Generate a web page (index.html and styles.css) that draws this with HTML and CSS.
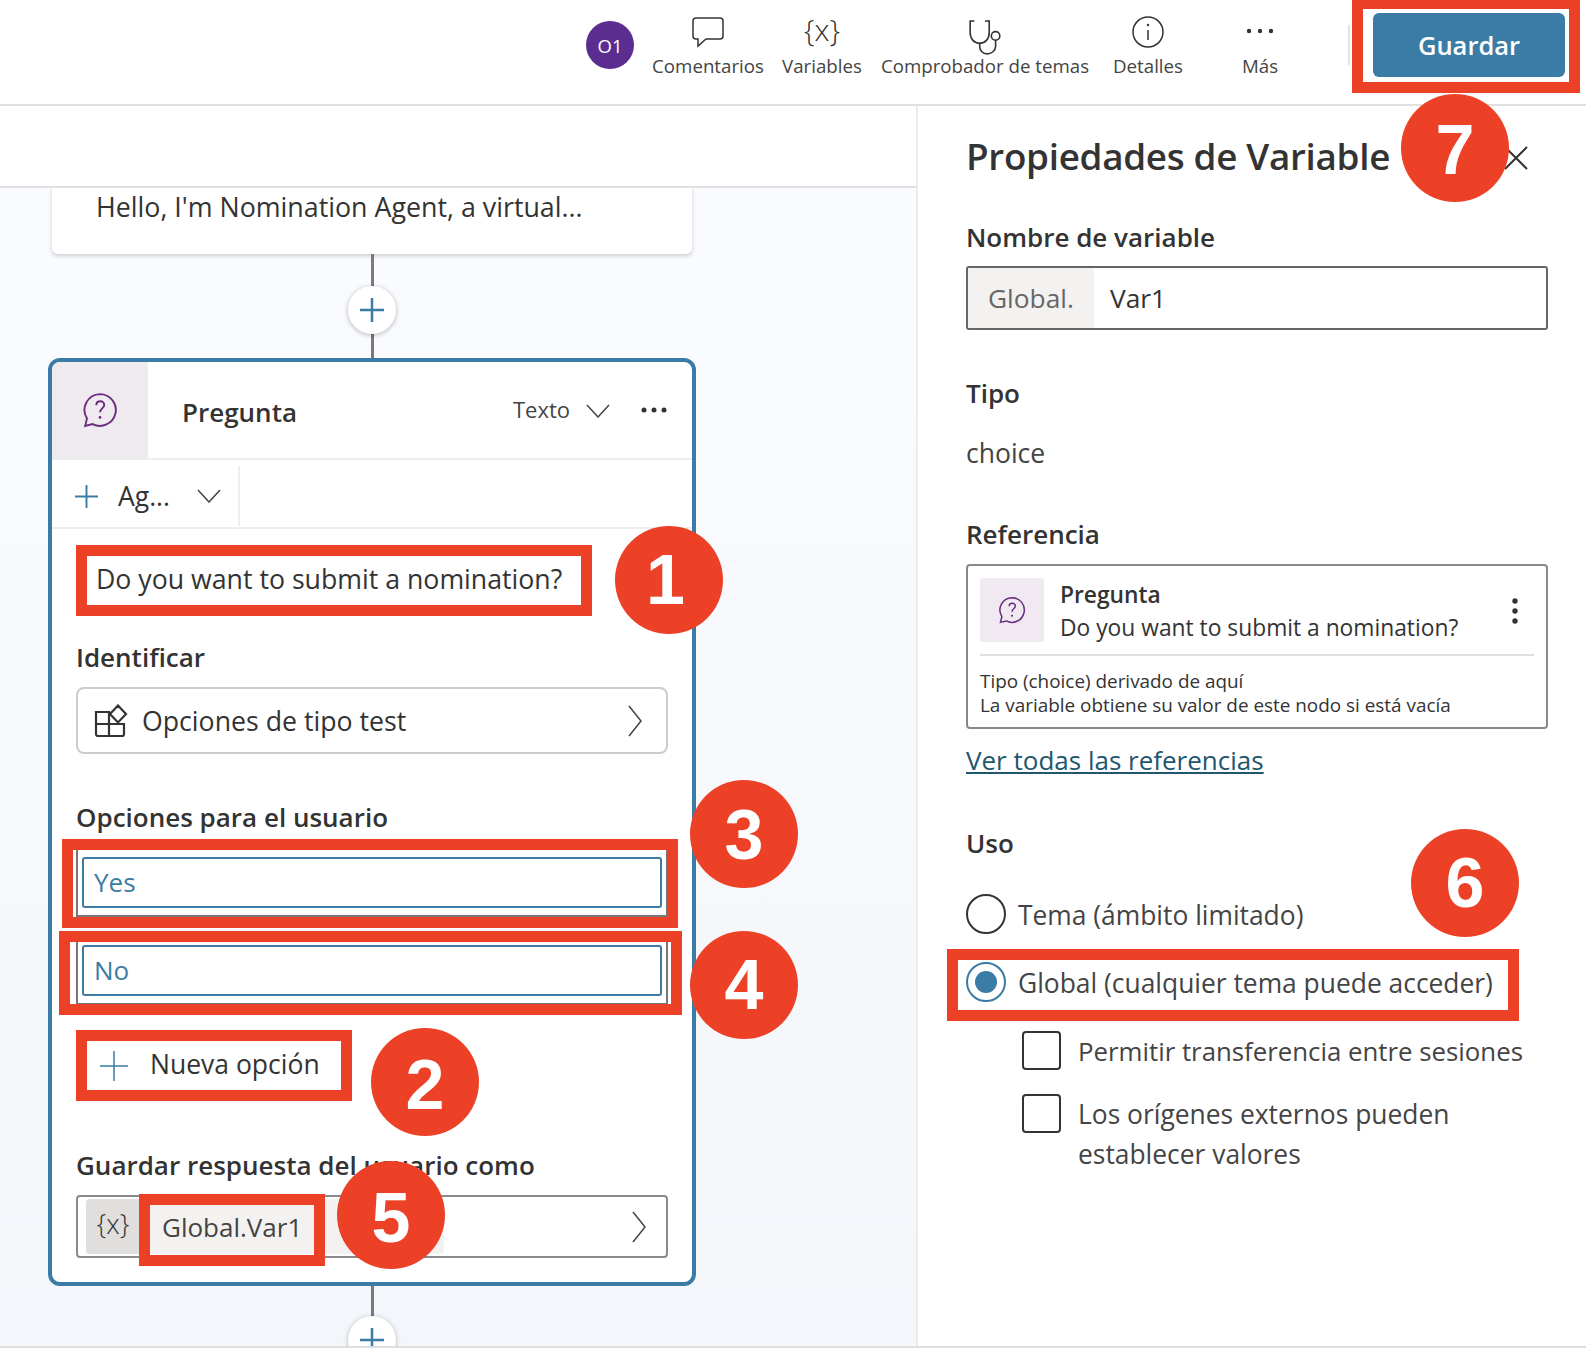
FILE: index.html
```html
<!DOCTYPE html>
<html lang="es">
<head>
<meta charset="utf-8">
<title>Propiedades de Variable</title>
<link rel="stylesheet" href="styles.css">
</head>
<body>
<div class="app">
  <header class="topbar">
    <div class="avatar">O1</div>
    <div class="tool tool-com">
      <svg class="tool-icon" viewBox="0 0 34 32"><path d="M5 2h24a3 3 0 0 1 3 3v15a3 3 0 0 1-3 3H15l-8 7v-7H5a3 3 0 0 1-3-3V5a3 3 0 0 1 3-3z"/></svg>
      <span>Comentarios</span>
    </div>
    <div class="tool tool-var">
      <span class="tool-glyph">{x}</span>
      <span>Variables</span>
    </div>
    <div class="tool tool-chk">
      <svg class="tool-icon" viewBox="0 0 32 34"><path d="M6 1H2v11c0 6 4 10 9 10s9-4 9-10V1h-4M11 22v3c0 4 3 7 7 7s8-3 8-7v-6"/><circle cx="26" cy="15" r="4"/></svg>
      <span>Comprobador de temas</span>
    </div>
    <div class="tool tool-det">
      <svg class="tool-icon" viewBox="0 0 34 34"><circle cx="17" cy="17" r="15"/><path d="M17 15v10"/><circle class="ink" cx="17" cy="10" r="1.2"/></svg>
      <span>Detalles</span>
    </div>
    <div class="tool tool-mas">
      <svg class="tool-icon" viewBox="0 0 34 32"><circle class="ink" cx="6" cy="15" r="2.2"/><circle class="ink" cx="17" cy="15" r="2.2"/><circle class="ink" cx="28" cy="15" r="2.2"/></svg>
      <span>Más</span>
    </div>
    <div class="top-sep"></div>
    <button class="save">Guardar</button>
  </header>

  <main class="main">
    <section class="left">
      <div class="subheader"></div>
      <div class="canvas">
        <div class="msg-card">Hello, I'm Nomination Agent, a virtual...</div>
        <div class="connector">
          <div class="plus-btn"><svg viewBox="0 0 26 26"><path d="M13 1v24M1 13h24"/></svg></div>
        </div>
        <article class="card">
          <div class="card-head">
            <div class="tile">
              <svg class="q-icon" viewBox="0 0 34 34"><path d="M17 2a15 15 0 1 1-7 28.300L3 32l1.700-7A15 15 0 0 1 17 2z"/><path d="M13.500 12.500c0-5 7.500-5 7.500-.3 0 3.300-4 3.300-4 7"/><circle class="fill" cx="17" cy="24" r="1.300"/></svg>
            </div>
            <div class="card-title">Pregunta</div>
            <div class="card-type">Texto</div>
            <svg class="chev-down" viewBox="0 0 24 14"><path d="M1 1l11 12L23 1"/></svg>
            <svg class="head-dots" viewBox="0 0 26 6"><circle cx="3" cy="3" r="2.500"/><circle cx="13" cy="3" r="2.500"/><circle cx="23" cy="3" r="2.500"/></svg>
          </div>
          <div class="card-tools">
            <div class="add-group">
              <svg class="plus-small" viewBox="0 0 24 24"><path d="M12 0v24M0 12h24"/></svg>
              <span>Ag...</span>
              <svg class="chev-down chev-tool" viewBox="0 0 24 14"><path d="M1 1l11 12L23 1"/></svg>
            </div>
          </div>
          <div class="card-body">
            <div class="q-text">Do you want to submit a nomination?</div>
            <div class="label l-ident">Identificar</div>
            <div class="selector">
              <svg class="ent-icon" viewBox="0 0 34 34"><path d="M2 8h13v12H2zM2 20h13v12H4a2 2 0 0 1-2-2zM15 20h15v10a2 2 0 0 1-2 2H15zM16 10l8-8.500 8 8.500-8 8.500z"/></svg>
              <span>Opciones de tipo test</span>
              <svg class="chev-right" viewBox="0 0 14 32"><path d="M1 1l12 15L1 31"/></svg>
            </div>
            <div class="label l-opts">Opciones para el usuario</div>
            <div class="opt-wrap"><div class="opt-input">Yes</div></div>
            <div class="opt-wrap opt-second"><div class="opt-input">No</div></div>
            <div class="new-opt">
              <svg class="plus-new" viewBox="0 0 28 30"><path d="M14 0v30M0 15h28"/></svg>
              <span>Nueva opción</span>
            </div>
            <div class="label l-save">Guardar respuesta del usuario como</div>
            <div class="var-field">
              <div class="var-x">{x}</div>
              <div class="var-name">Global.Var1</div>
              <svg class="chev-right chev-var" viewBox="0 0 14 32"><path d="M1 1l12 15L1 31"/></svg>
            </div>
          </div>
        </article>
        <div class="connector connector-end">
          <div class="plus-btn"><svg viewBox="0 0 26 26"><path d="M13 1v24M1 13h24"/></svg></div>
        </div>
      </div>
    </section>

    <aside class="panel">
      <div class="panel-head">
        <h1 class="panel-title">Propiedades de Variable</h1>
        <svg class="close" viewBox="0 0 24 24"><path d="M1 1l22 22M23 1L1 23"/></svg>
      </div>
      <div class="label p-name">Nombre de variable</div>
      <div class="name-input"><div class="prefix">Global.</div><div class="name-val">Var1</div></div>
      <div class="label p-type">Tipo</div>
      <div class="type-val">choice</div>
      <div class="label p-ref">Referencia</div>
      <div class="ref-card">
        <div class="ref-top">
          <div class="ref-tile">
            <svg class="q-icon q-small" viewBox="0 0 34 34"><path d="M17 2a15 15 0 1 1-7 28.300L3 32l1.700-7A15 15 0 0 1 17 2z"/><path d="M13.500 12.500c0-5 7.500-5 7.500-.3 0 3.300-4 3.300-4 7"/><circle class="fill" cx="17" cy="24" r="1.300"/></svg>
          </div>
          <div class="ref-text">
            <div class="ref-title">Pregunta</div>
            <div class="ref-sub">Do you want to submit a nomination?</div>
          </div>
          <svg class="ref-dots" viewBox="0 0 6 26"><circle cx="3" cy="3" r="2.700"/><circle cx="3" cy="13" r="2.700"/><circle cx="3" cy="23" r="2.700"/></svg>
        </div>
        <div class="ref-note">Tipo (choice) derivado de aquí<br>La variable obtiene su valor de este nodo si está vacía</div>
      </div>
      <a class="ref-link" href="#">Ver todas las referencias</a>
      <div class="label p-uso">Uso</div>
      <div class="radio-row r-first"><span class="radio"></span><span>Tema (ámbito limitado)</span></div>
      <div class="radio-row r-second"><span class="radio on"></span><span>Global (cualquier tema puede acceder)</span></div>
      <div class="check-row c-first"><span class="check"></span><span>Permitir transferencia entre sesiones</span></div>
      <div class="check-row c-second"><span class="check"></span><span>Los orígenes externos pueden<br>establecer valores</span></div>
    </aside>
  </main>

  <div class="mark mark-save"></div>
  <div class="mark mark-q"></div>
  <div class="mark mark-yes"></div>
  <div class="mark mark-no"></div>
  <div class="mark mark-new"></div>
  <div class="mark mark-var"></div>
  <div class="mark mark-global"></div>
  <div class="num n1">1</div>
  <div class="num n2">2</div>
  <div class="num n3">3</div>
  <div class="num n4">4</div>
  <div class="num n5">5</div>
  <div class="num n6">6</div>
  <div class="num n7">7</div>
</div>
</body>
</html>
```
FILE: styles.css
```css
* { box-sizing: border-box; }
html, body { margin: 0; padding: 0; background: #fff; }
body { font-family: "Open Sans", "Noto Sans", sans-serif; color: #333; }
svg { display: block; fill: none; stroke: #333; stroke-width: 1.500; flex: none; }

.app { position: relative; width: 1586px; height: 1348px; overflow: hidden; border-bottom: 2px solid #dedede; display: flex; flex-direction: column; }

/* top bar */
.topbar { height: 106px; flex: none; border-bottom: 2px solid #e0e0e0; display: flex; align-items: flex-start; padding-left: 586px; }
.avatar { width: 48px; height: 48px; margin-top: 21px; border-radius: 50%; background: #5c2d91; color: #fff; font-size: 18.500px; font-weight: 500; display: flex; align-items: center; justify-content: center; }
.tool { display: flex; flex-direction: column; align-items: center; white-space: nowrap; font-size: 18.700px; color: #444; height: 105px; padding-top: 15px; }
.tool-icon { height: 34px; width: 34px; }
.tool-chk .tool-icon { width: 38px; height: 36px; margin: 5px 0 -7px; }
.tool-glyph { height: 34px; font-size: 30px; font-weight: 300; line-height: 30px; color: #333; }
.tool > span:last-child { margin-top: 3px; line-height: 28px; }
.tool-com { width: 112px; margin-left: 18px; }
.tool-var { width: 78px; margin-left: 19px; }
.tool-chk { width: 210px; margin-left: 19px; }
.tool-det { width: 70px; margin-left: 23px; }
.tool-mas { width: 36px; margin-left: 59px; }
.ink { fill: #333; stroke: none; }
.top-sep { width: 2px; height: 40px; margin: 25px 0 0 70px; background: #e4e4e4; }
.save { width: 192px; height: 64px; margin: 13px 0 0 23px; border: 0; border-radius: 6px; background: #3a7ca5; color: #fff; font: 600 25.500px "Open Sans", sans-serif; }

.main { flex: 1; min-height: 0; display: flex; }

/* left column */
.left { width: 918px; flex: none; border-right: 2px solid #ececec; display: flex; flex-direction: column; }
.subheader { height: 82px; flex: none; background: #fff; border-bottom: 2px solid #e0e0e0; }
.canvas { flex: 1; min-height: 0; overflow: hidden; padding-left: 48px; background: linear-gradient(#fafbfe, #f3f6fa); }
.msg-card { width: 640px; height: 66px; margin-left: 4px; padding-left: 44px; background: #fff; border-radius: 0 0 6px 6px; box-shadow: 0 2px 4px rgba(0,0,0,.18); font-size: 26.800px; line-height: 37px; white-space: nowrap; }
.connector { position: relative; width: 648px; height: 104px; display: flex; justify-content: center; align-items: center; }
.connector::before { content: ""; position: absolute; left: 323px; top: 0; bottom: 0; width: 3px; background: #7a7a7a; }
.connector-end { align-items: flex-start; height: 60px; }
.plus-btn { position: relative; width: 48px; height: 48px; margin-top: 8px; border-radius: 50%; background: #fff; box-shadow: 0 1px 5px rgba(0,0,0,.28); display: flex; align-items: center; justify-content: center; }
.connector-end .plus-btn { margin-top: 30px; }
.plus-btn svg { width: 26px; height: 26px; stroke: #3a7ca5; stroke-width: 2.500; }

.card { width: 648px; height: 928px; border: 4px solid #3a7ca5; border-radius: 12px; background: #fff; overflow: hidden; }
.card-head { height: 98px; display: flex; align-items: center; border-bottom: 2px solid #eee; }
.tile { width: 96px; height: 98px; background: #efe9f0; display: flex; align-items: center; justify-content: center; }
.q-icon { width: 36px; height: 36px; stroke: #6b2c7b; stroke-width: 1.800; margin-top: -1px; }
.q-icon .fill { fill: #6b2c7b; stroke: none; }
.card-title { margin: 0 0 -3px 34px; font-size: 26px; font-weight: 600; flex: 1; }
.card-type { font-size: 22px; color: #444; margin-top: -3px; }
.chev-down { width: 24px; height: 14px; stroke: #444; margin: 2px 0 0 16px; }
.head-dots { width: 26px; height: 6px; fill: #333; stroke: none; margin: 0 25px 0 31px; }
.card-tools { height: 69px; padding-top: 6px; border-bottom: 2px solid #eee; }
.add-group { width: 188px; height: 60px; padding-left: 23px; border-right: 2px solid #eee; display: flex; align-items: center; font-size: 26.500px; }
.plus-small { width: 23px; height: 23px; stroke: #3a7ca5; stroke-width: 2; }
.add-group span { margin-left: 20px; }
.chev-tool { margin: 0 0 0 27px; }

.card-body { padding: 31px 24px 0; }
.q-text { height: 40px; padding-left: 20px; font-size: 26.700px; line-height: 38px; white-space: nowrap; }
.label { height: 40px; font-size: 26px; line-height: 39px; font-weight: 600; white-space: nowrap; }
.l-ident { margin-top: 38px; }
.selector { height: 67px; margin-top: 9px; padding: 0 24px 0 16px; border: 2px solid #ccc; border-radius: 8px; display: flex; align-items: center; font-size: 26.700px; }
.selector span { margin-left: 14px; flex: 1; }
.ent-icon { width: 34px; height: 34px; stroke-width: 2.200; }
.chev-right { width: 14px; height: 32px; stroke: #444; }
.l-opts { margin-top: 44px; }
.opt-wrap { height: 69px; margin-top: 10px; padding: 7px 4px 0; border: 2px solid #777; border-top-color: transparent; background: #fff; }
.opt-second { margin-top: 19px; }
.opt-input { height: 51px; padding-left: 10px; border: 2px solid #3a7ca5; border-radius: 3px; color: #3a7ca5; font-size: 26px; line-height: 46px; }
.new-opt { height: 49px; margin-top: 36px; padding: 0 0 4px 24px; display: flex; align-items: center; font-size: 26.500px; }
.plus-new { width: 28px; height: 30px; margin-top: 4px; stroke: #3a7ca5; }
.new-opt span { margin-left: 22px; }
.l-save { margin-top: 56px; }
.var-field { height: 63px; margin-top: 9px; padding: 2px 20px 0 8px; border: 2px solid #8a8a8a; border-radius: 4px; display: flex; align-items: flex-start; font-size: 26px; }
.var-x { width: 54px; height: 55px; background: #e1dfdd; border-radius: 4px 0 0 4px; font-size: 27px; font-weight: 300; line-height: 50px; text-align: center; }
.var-name { width: 304px; height: 55px; padding-left: 22px; background: #f3f2f1; border-radius: 0 4px 4px 0; line-height: 56px; color: #444; margin-right: auto; }
.chev-var { margin-top: 12px; }

/* right panel */
.panel { flex: 1; padding: 22px 38px 0 48px; }
.panel-head { height: 54px; display: flex; align-items: center; justify-content: space-between; padding-right: 20px; }
.panel-title { margin: 2px 0 0; font-size: 36.800px; font-weight: 600; line-height: 54px; letter-spacing: -.3px; white-space: nowrap; }
.close { width: 24px; height: 24px; stroke-width: 2; margin-top: 6px; }
.p-name { margin-top: 36px; }
.name-input { height: 64px; margin-top: 8px; border: 2px solid #666; border-radius: 3px; display: flex; font-size: 26.300px; line-height: 60px; }
.prefix { width: 126px; padding-left: 20px; background: #f3f2f1; color: #666; }
.name-val { padding-left: 16px; }
.p-type { margin-top: 44px; }
.type-val { height: 40px; margin-top: 20px; font-size: 26.500px; line-height: 38px; color: #444; }
.p-ref { margin-top: 41px; }
.ref-card { height: 165px; margin-top: 9px; padding: 12px 12px 0; border: 2px solid #888; border-radius: 4px; }
.ref-top { height: 78px; border-bottom: 2px solid #e2e0de; display: flex; }
.ref-tile { width: 64px; height: 64px; background: #f0e9f2; border-radius: 3px; display: flex; align-items: center; justify-content: center; }
.q-small { width: 28px; height: 28px; margin: 0; }
.ref-text { margin-left: 16px; flex: 1; font-size: 22.800px; line-height: 33px; }
.ref-title { font-weight: 600; }
.ref-dots { width: 6px; height: 26px; fill: #333; stroke: none; margin: 20px 16px 0 0; }
.ref-note { margin-top: 13px; font-size: 18.900px; line-height: 24px; }
.ref-link { display: block; height: 40px; margin-top: 13px; font-size: 26px; line-height: 37px; color: #22566e; text-decoration: underline; white-space: nowrap; }
.p-uso { margin-top: 42px; }
.radio-row, .check-row { display: flex; font-size: 26.400px; line-height: 40px; white-space: nowrap; color: #444; }
.radio-row { height: 40px; }
.radio-row span:last-child { margin-left: 12px; line-height: 43px; }
.r-first { margin-top: 30px; }
.r-second { margin-top: 28px; }
.radio { width: 40px; height: 40px; border: 2px solid #333; border-radius: 50%; flex: none; display: flex; align-items: center; justify-content: center; }
.radio.on { border-color: #3a7ca5; }
.radio.on::after { content: ""; width: 22px; height: 22px; border-radius: 50%; background: #3a7ca5; }
.check-row { padding-left: 56px; }
.check-row span:last-child { margin-left: 17px; }
.c-first { margin-top: 29px; font-size: 25.800px; }
.c-second { margin-top: 23px; }
.check { width: 39px; height: 39px; border: 2px solid #333; border-radius: 4px; flex: none; }

/* annotations over the screenshot */
.mark { position: absolute; border: 11px solid #ec4126; }
.mark-save { left: 1352px; top: -2px; width: 228px; height: 95px; }
.mark-q { left: 76px; top: 545px; width: 516px; height: 71px; }
.mark-yes { left: 62px; top: 839px; width: 616px; height: 89px; }
.mark-no { left: 59px; top: 931px; width: 623px; height: 84px; }
.mark-new { left: 76px; top: 1030px; width: 276px; height: 71px; }
.mark-var { left: 139px; top: 1194px; width: 186px; height: 72px; }
.mark-global { left: 947px; top: 949px; width: 572px; height: 72px; }
.num { position: absolute; width: 108px; height: 108px; border-radius: 50%; background: #ec4126; color: #fff; font: 700 70px/108px "Liberation Sans", sans-serif; text-align: center; }
.n1 { left: 615px; top: 526px; padding-right: 7px; }
.n2 { left: 371px; top: 1028px; line-height: 114px; }
.n3 { left: 690px; top: 780px; line-height: 111px; }
.n4 { left: 690px; top: 931px; }
.n5 { left: 337px; top: 1161px; line-height: 114px; }
.n6 { left: 1411px; top: 829px; }
.n7 { left: 1401px; top: 94px; line-height: 112px; }
```
